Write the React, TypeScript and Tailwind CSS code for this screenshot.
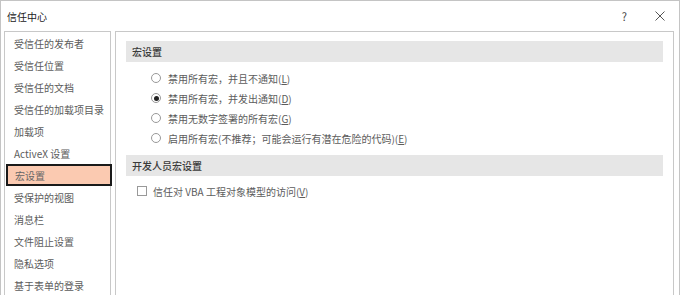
import type { ReactNode } from 'react'

const font = { fontFamily: '"Noto Sans CJK SC", "Noto Sans", sans-serif' }

const navItems = [
  '受信任的发布者',
  '受信任位置',
  '受信任的文档',
  '受信任的加载项目录',
  '加载项',
  'ActiveX 设置',
  '宏设置',
  '受保护的视图',
  '消息栏',
  '文件阻止设置',
  '隐私选项',
  '基于表单的登录',
]

const macroOptions: { label: string; key: string; checked?: boolean }[] = [
  { label: '禁用所有宏，并且不通知', key: 'L' },
  { label: '禁用所有宏，并发出通知', key: 'D', checked: true },
  { label: '禁用无数字签署的所有宏', key: 'G' },
  { label: '启用所有宏(不推荐；可能会运行有潜在危险的代码)', key: 'E' },
]

function SectionHeader({ children }: { children: ReactNode }) {
  return (
    <div className="mx-[10px] flex h-[21px] items-center bg-[#e6e6e6] pl-[6px] text-[10px] font-medium text-[#3a3a3a]">
      {children}
    </div>
  )
}

function Radio({ checked }: { checked?: boolean }) {
  return (
    <span className="flex h-[10px] w-[10px] shrink-0 items-center justify-center rounded-full border border-[#999] bg-white">
      {checked ? <span className="h-[5px] w-[5px] rounded-full bg-[#222]" /> : null}
    </span>
  )
}

export default function App() {
  return (
    <div
      className="flex h-[295px] w-[680px] flex-col overflow-hidden border-x border-t border-[#c4c4c4] bg-white"
      style={font}
    >
      <div className="flex h-[30px] shrink-0 items-center justify-between pl-[6px] pr-[14px]">
        <span className="text-[10px] text-[#222]">信任中心</span>
        <div className="flex items-center gap-[28px]">
          <span className="text-[11px] text-[#444]">?</span>
          <svg width="10" height="10" viewBox="0 0 10 10" className="text-[#555]">
            <path d="M0.5 0.5 L9.5 9.5 M9.5 0.5 L0.5 9.5" stroke="currentColor" strokeWidth="1" />
          </svg>
        </div>
      </div>

      <div className="flex min-h-0 flex-1 gap-[4px] pl-[3px]">
        <nav className="w-[107px] shrink-0 border-x border-t border-[#c8c8c8]">
          {navItems.map((item) => {
            const active = item === '宏设置'
            return (
              <div
                key={item}
                className={
                  active
                    ? 'ml-[1px] mr-[-2px] flex h-[22px] items-center border-2 border-[#1a1a1a] bg-[#fbcab1] pl-[7px] text-[10px] text-[#666]'
                    : 'flex h-[22px] items-center pl-[9px] text-[10px] text-[#5c5c5c]'
                }
              >
                {item}
              </div>
            )
          })}
        </nav>

        <section className="w-[559px] shrink-0 border-x border-t border-[#c8c8c8] pt-[9px]">
          <SectionHeader>宏设置</SectionHeader>

          <div className="mt-[6px] flex flex-col pl-[35px]">
            {macroOptions.map((option) => (
              <label key={option.key} className="flex h-[20px] items-center gap-[7px] text-[10px] text-[#5c5c5c]">
                <Radio checked={option.checked} />
                <span>
                  {option.label}(<span className="underline">{option.key}</span>)
                </span>
              </label>
            ))}
          </div>

          <div className="mt-[7px]">
            <SectionHeader>开发人员宏设置</SectionHeader>
          </div>

          <label className="mt-[5px] flex h-[20px] items-center gap-[6px] pl-[21px] text-[10px] text-[#5c5c5c]">
            <span className="h-[10px] w-[10px] shrink-0 border border-[#999] bg-white" />
            <span>
              信任对 VBA 工程对象模型的访问(<span className="underline">V</span>)
            </span>
          </label>
        </section>
      </div>
    </div>
  )
}
